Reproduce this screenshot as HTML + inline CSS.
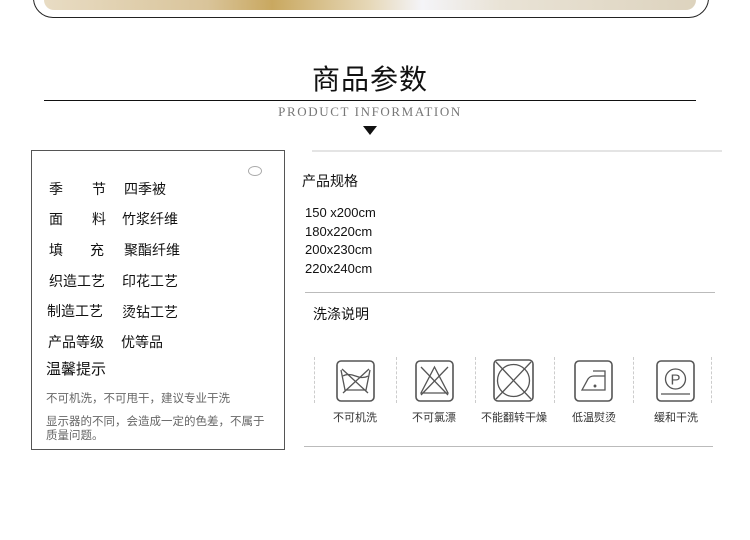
<!DOCTYPE html>
<html><head><meta charset="utf-8"><style>
body{margin:0;width:750px;height:540px;background:#fff;position:relative;overflow:hidden;font-family:"Liberation Sans","Noto Sans CJK SC",sans-serif;color:#111}
.a{position:absolute;white-space:nowrap}
.frame{position:absolute;left:33px;top:-40px;width:674px;height:56px;border:1.5px solid #222;border-radius:0 0 20px 20px}
.img{position:absolute;left:44px;top:0;width:652px;height:10px;border-radius:0 0 14px 14px;background:linear-gradient(90deg,#e8dcc4,#d9c49a 25%,#c9a860 35%,#e6d8b8 50%,#f4f4f8 58%,#e9e3d6 70%,#ddd3be)}
.lab{font-size:14px}
.sm{font-size:11.5px;color:#666}
.dash{position:absolute;top:357px;height:46px;border-left:1px dashed #ccc}
.il{position:absolute;top:409px;font-size:11px;color:#333;text-align:center;width:90px}
</style></head><body>
<div class="img"></div>
<div class="frame"></div>
<div class="a" style="left:0;width:740px;text-align:center;top:58px;font-size:28px;letter-spacing:1px">商品参数</div>
<div class="a" style="left:44px;top:100px;width:652px;height:1px;background:#111"></div>
<div class="a" style="left:0;width:740px;text-align:center;top:104px;font-family:'Liberation Serif',serif;font-size:13px;letter-spacing:1.6px;color:#777">PRODUCT INFORMATION</div>
<div class="a" style="left:363px;top:126px;width:0;height:0;border-left:7px solid transparent;border-right:7px solid transparent;border-top:9px solid #111"></div>

<div class="a" style="left:31px;top:150px;width:252px;height:298px;border:1.5px solid #555"></div>
<div class="a" style="left:248px;top:166px;width:12px;height:8px;border:1px solid #aaa;border-radius:50%"></div>
<div class="a lab" style="left:49px;top:179px">季</div><div class="a lab" style="left:92px;top:179px">节</div><div class="a lab" style="left:124px;top:179px">四季被</div>
<div class="a lab" style="left:49px;top:209px">面</div><div class="a lab" style="left:92px;top:209px">料</div><div class="a lab" style="left:122px;top:209px">竹浆纤维</div>
<div class="a lab" style="left:49px;top:240px">填</div><div class="a lab" style="left:90px;top:240px">充</div><div class="a lab" style="left:124px;top:240px">聚酯纤维</div>
<div class="a lab" style="left:49px;top:271px">织造工艺</div><div class="a lab" style="left:122px;top:271px">印花工艺</div>
<div class="a lab" style="left:47px;top:301px">制造工艺</div><div class="a lab" style="left:122px;top:302px">烫钻工艺</div>
<div class="a lab" style="left:48px;top:332px">产品等级</div><div class="a lab" style="left:121px;top:332px">优等品</div>
<div class="a" style="left:46px;top:358px;font-size:15px">温馨提示</div>
<div class="a sm" style="left:46px;top:390px">不可机洗，不可甩干，建议专业干洗</div>
<div class="a sm" style="left:46px;top:415px;line-height:14px">显示器的不同，会造成一定的色差，不属于<br>质量问题。</div>

<div class="a" style="left:312px;top:150px;width:410px;height:2px;background:#e4e4e4"></div>
<div class="a" style="left:302px;top:171px;font-size:14px">产品规格</div>
<div class="a" style="left:305px;top:204px;font-size:13px;line-height:18.7px">150 x200cm<br>180x220cm<br>200x230cm<br>220x240cm</div>
<div class="a" style="left:305px;top:292px;width:410px;height:1px;background:#bbb"></div>
<div class="a" style="left:313px;top:304px;font-size:14px">洗涤说明</div>

<div class="dash" style="left:314px"></div><div class="dash" style="left:396px"></div><div class="dash" style="left:475px"></div><div class="dash" style="left:554px"></div><div class="dash" style="left:633px"></div><div class="dash" style="left:711px"></div>

<svg class="a" style="left:336px;top:360px" width="40" height="42" viewBox="0 0 40 42" fill="none" stroke="#555" stroke-width="1.3">
<rect x="1" y="1" width="37" height="40" rx="4" stroke-width="1.6"/><path d="M5 10 L9 30 H30 L34 10 M7 16 Q12 13 19.5 16 Q27 19 32 16 M6 9 L32 33 M33 9 L7 33"/></svg>
<svg class="a" style="left:415px;top:360px" width="40" height="42" viewBox="0 0 40 42" fill="none" stroke="#555" stroke-width="1.3">
<rect x="1" y="1" width="37" height="40" rx="4" stroke-width="1.6"/><path d="M19.5 7 L33 33 H6 Z M6 7 L33 35 M33 7 L6 35"/></svg>
<svg class="a" style="left:493px;top:359px" width="42" height="44" viewBox="0 0 42 44" fill="none" stroke="#555" stroke-width="1.3">
<rect x="1" y="1" width="39" height="41" rx="4" stroke-width="1.6"/><circle cx="20.5" cy="21.5" r="16"/><path d="M3 3 L38 40 M38 3 L3 40"/></svg>
<svg class="a" style="left:574px;top:360px" width="40" height="42" viewBox="0 0 40 42" fill="none" stroke="#555" stroke-width="1.3">
<rect x="1" y="1" width="37" height="40" rx="4" stroke-width="1.6"/><path d="M8 30 L14 19 Q16 16 20 16 H31 V30 Z M19 11 H31 V16"/><circle cx="21" cy="26" r="0.8" fill="#555"/></svg>
<svg class="a" style="left:656px;top:360px" width="40" height="42" viewBox="0 0 40 42" fill="none" stroke="#555" stroke-width="1.3">
<rect x="1" y="1" width="37" height="40" rx="4" stroke-width="1.6"/><circle cx="19.5" cy="19" r="10"/><text x="19.5" y="24.5" font-size="15" text-anchor="middle" fill="#555" stroke="none" font-family="Liberation Sans">P</text><path d="M5 34 H34"/></svg>

<div class="il" style="left:310px">不可机洗</div>
<div class="il" style="left:389px">不可氯漂</div>
<div class="il" style="left:469px">不能翻转干燥</div>
<div class="il" style="left:549px">低温熨烫</div>
<div class="il" style="left:631px">缓和干洗</div>
<div class="a" style="left:304px;top:446px;width:409px;height:1px;background:#bbb"></div>
</body></html>
